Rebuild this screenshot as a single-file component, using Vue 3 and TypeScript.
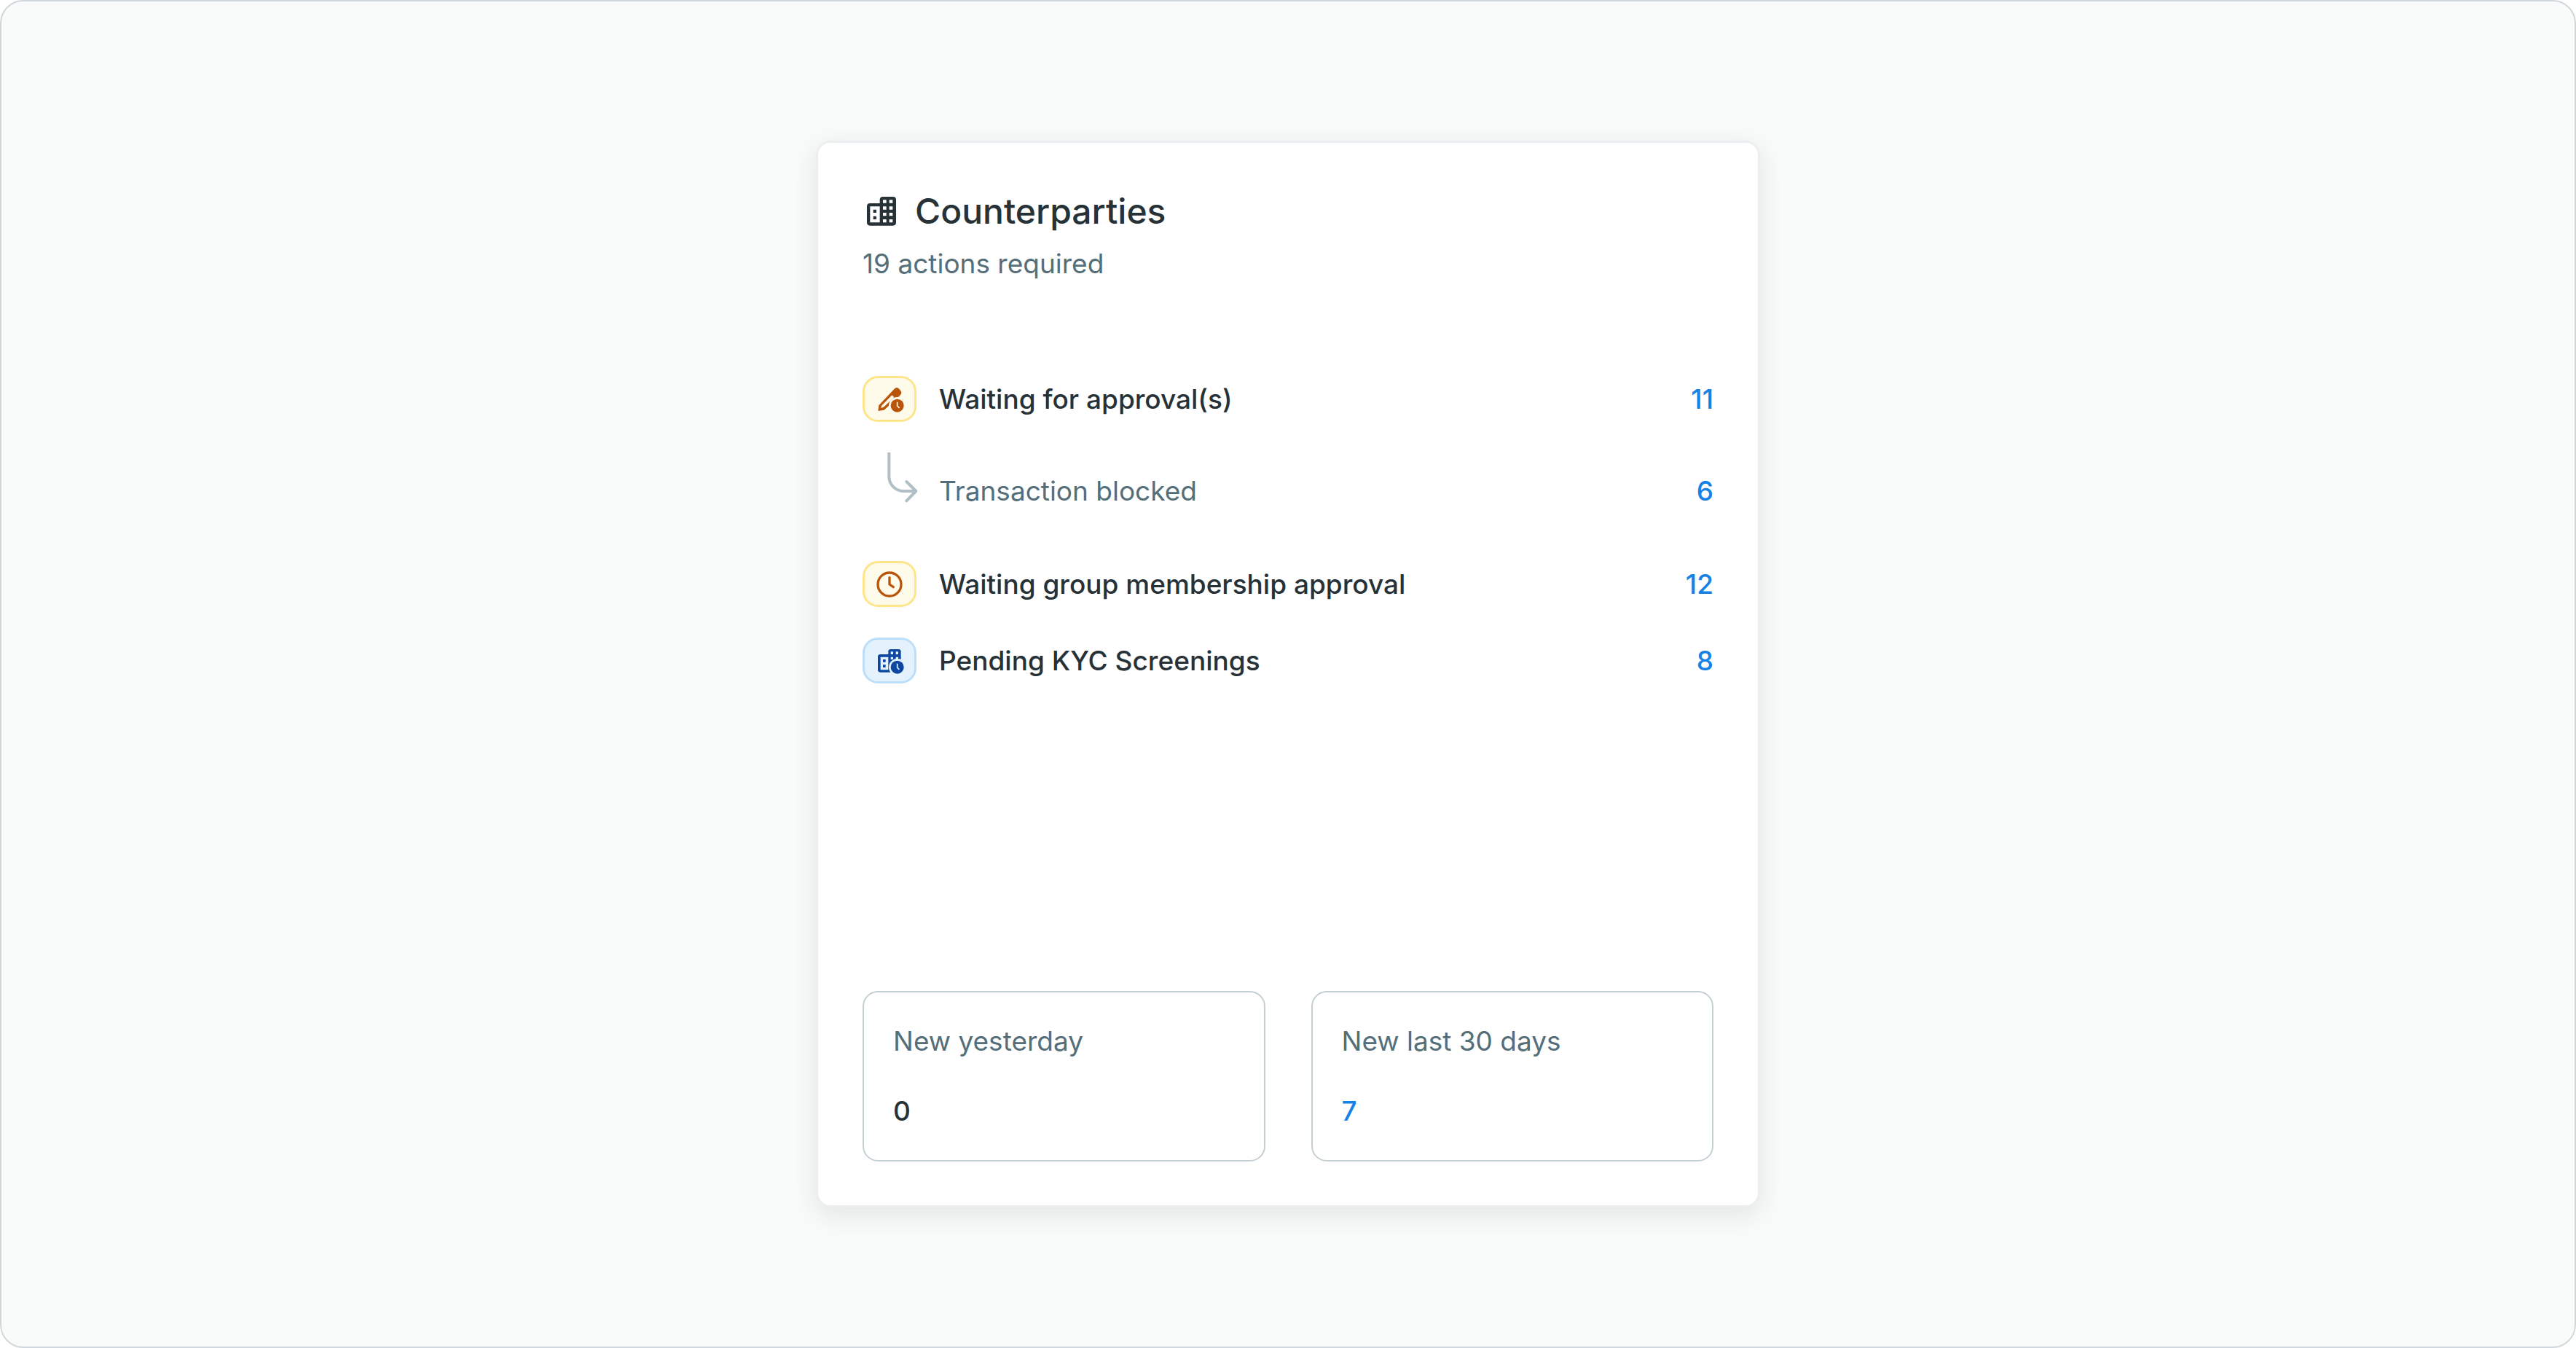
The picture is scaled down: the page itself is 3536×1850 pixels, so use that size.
<script setup lang="ts">
type IconName = 'pencil' | 'arrow' | 'clock' | 'building'

interface ActionRow {
  label: string
  count: number
  icon: IconName
  tone: 'amber' | 'blue' | 'plain'
}

interface Stat {
  label: string
  value: number
}

const rows: ActionRow[] = [
  { label: 'Waiting for approval(s)', count: 11, icon: 'pencil', tone: 'amber' },
  { label: 'Transaction blocked', count: 6, icon: 'arrow', tone: 'plain' },
  { label: 'Waiting group membership approval', count: 12, icon: 'clock', tone: 'amber' },
  { label: 'Pending KYC Screenings', count: 8, icon: 'building', tone: 'blue' },
]

const stats: Stat[] = [
  { label: 'New yesterday', value: 0 },
  { label: 'New last 30 days', value: 7 },
]
</script>

<template>
  <main class="page">
    <section class="card" aria-labelledby="card-title">
      <header class="head">
        <div class="title-row">
          <svg class="title-icon" viewBox="42 44 156 156" aria-hidden="true">
            <path
              fill="currentColor"
              fill-rule="evenodd"
              d="M73 89H113V75Q113 62 126 62H167Q180 62 180 75V168Q180 181 167 181H73Q60 181 60 168V102Q60 89 73 89ZM73 102V168H113V102ZM126 75V88H140V75ZM152 75V88H166V75ZM126 102V115H140V102ZM152 102V115H166V102ZM126 128V141H140V128ZM152 128V141H166V128ZM126 155V168H140V155ZM152 155V168H166V155ZM86 115H99V128H86ZM86 142H99V155H86Z"
            />
          </svg>
          <h1 id="card-title" class="title">Counterparties</h1>
        </div>
        <p class="subtitle">19 actions required</p>
      </header>

      <ul class="rows">
        <li v-for="row in rows" :key="row.label" class="row" :class="{ sub: row.tone === 'plain' }">
          <svg v-if="row.icon === 'arrow'" class="arrow" viewBox="42 63 222 243" aria-hidden="true">
            <g fill="none" stroke="currentColor" stroke-width="12">
              <path d="M151 63V162A60 60 0 0 0 211 222H262" />
              <path d="M223 183L262 222L223 262" stroke-linecap="round" stroke-linejoin="round" />
            </g>
          </svg>
          <span v-else class="badge" :class="row.tone">
            <svg v-if="row.icon === 'pencil'" class="badge-icon" viewBox="79 70 144 144" aria-hidden="true">
              <path
                fill="currentColor"
                fill-rule="evenodd"
                d="M104 190L107 167L171 99Q180 90 189 98L196 105Q204 114 196 123L129 186ZM116 178L127 174L170 133L161 125L118 169Z"
              />
              <circle class="cut" cx="183" cy="168" r="35" />
              <path fill="currentColor" d="M163 120L180 102L199 115Q199 121 192 128L186 133H170Z" />
              <circle fill="currentColor" cx="183" cy="168" r="27" />
              <path class="hand" d="M183 153V169L192 178" />
            </svg>
            <svg v-else-if="row.icon === 'clock'" class="badge-icon" viewBox="79 66 144 144" aria-hidden="true">
              <g fill="none" stroke="currentColor" stroke-width="10" stroke-linecap="round" stroke-linejoin="round">
                <circle cx="151" cy="138" r="48" />
                <path d="M151 110V138L167 149" />
              </g>
            </svg>
            <svg v-else class="badge-icon" viewBox="79 68 144 144" aria-hidden="true">
              <path
                fill="currentColor"
                fill-rule="evenodd"
                d="M113 113H146V102Q146 92 156 92H188Q198 92 198 102V187H113Q103 187 103 177V123Q103 113 113 113ZM114 124V177H146V124ZM156 102V113H166V102ZM177 102V113H187V102ZM156 124V134H166V124ZM177 124V134H187V124ZM124 134H135V145H124ZM124 156H135V167H124Z"
              />
              <circle class="cut" cx="183" cy="166" r="35" />
              <circle fill="currentColor" cx="183" cy="166" r="27" />
              <path class="hand" d="M183 151V167L191 176" />
            </svg>
          </span>
          <span class="label">{{ row.label }}</span>
          <a class="count" href="#">{{ row.count }}</a>
        </li>
      </ul>

      <div class="stats">
        <div v-for="stat in stats" :key="stat.label" class="stat">
          <span class="stat-label">{{ stat.label }}</span>
          <a v-if="stat.value > 0" class="stat-value count" href="#">{{ stat.value }}</a>
          <span v-else class="stat-value">{{ stat.value }}</span>
        </div>
      </div>
    </section>
  </main>
</template>

<style>
body {
  margin: 0;
  background: #ffffff;
}
</style>

<style scoped>
.page {
  box-sizing: border-box;
  min-height: 100vh;
  padding: 191px 24px;
  display: flex;
  justify-content: center;
  background: #f9fbfa;
  border: 2px solid #cfd8dc;
  border-radius: 32px;
  font-family: Inter, "Liberation Sans", sans-serif;
  font-size: 37px;
  line-height: 56px;
  color: #263238;
}

.card {
  box-sizing: border-box;
  width: 100%;
  max-width: 1296px;
  padding: 58px 61px 60px;
  display: flex;
  flex-direction: column;
  background: #ffffff;
  border: 3px solid #eceff1;
  border-radius: 20px;
  box-shadow: 0 10px 36px rgba(38, 50, 56, 0.11);
}

.head {
  display: flex;
  flex-direction: column;
  gap: 8px;
  margin-bottom: 126px;
}

.title-row {
  display: flex;
  align-items: center;
  gap: 20px;
}

.title-icon {
  width: 52px;
  height: 52px;
}

.title {
  margin: 0;
  font-size: 48px;
  line-height: 72px;
  font-weight: 500;
}

.subtitle {
  margin: 0;
  color: #546e7a;
}

.rows {
  margin: 0 0 64px;
  padding: 0;
  list-style: none;
  display: flex;
  flex-direction: column;
  gap: 42px;
}

.row {
  display: flex;
  align-items: center;
  gap: 31px;
  font-weight: 500;
}

.row.sub {
  align-items: flex-end;
  margin-bottom: 26px;
}

.sub .label {
  font-weight: 400;
  color: #546e7a;
}

.label {
  flex: 1;
}

.arrow {
  width: 74px;
  height: 81px;
  overflow: visible;
  color: #b0bec5;
}

.badge {
  box-sizing: border-box;
  width: 74px;
  height: 63px;
  display: flex;
  align-items: center;
  justify-content: center;
  border: 3px solid;
  border-radius: 21px;
}

.badge-icon {
  display: block;
  width: 48px;
  height: 48px;
}

.amber {
  --badge-bg: #fffbea;
  background: var(--badge-bg);
  border-color: #ffe58a;
  color: #b9540b;
}

.blue {
  --badge-bg: #e3f2fd;
  background: var(--badge-bg);
  border-color: #bbdefb;
  color: #0d47a1;
}

.cut {
  fill: var(--badge-bg);
}

.hand {
  fill: none;
  stroke: var(--badge-bg);
  stroke-width: 5;
}

.count {
  color: #1682e5;
  font-kerning: none;
  text-decoration: none;
}

.stats {
  margin-top: auto;
  display: grid;
  grid-template-columns: 1fr 1fr;
  gap: 63px;
}

.stat {
  padding: 39px 40px;
  display: flex;
  flex-direction: column;
  align-items: flex-start;
  gap: 40px;
  border: 2px solid #c4cfd4;
  border-radius: 21px;
}

.stat-label {
  color: #546e7a;
}

.stat-value {
  font-weight: 500;
}
</style>
